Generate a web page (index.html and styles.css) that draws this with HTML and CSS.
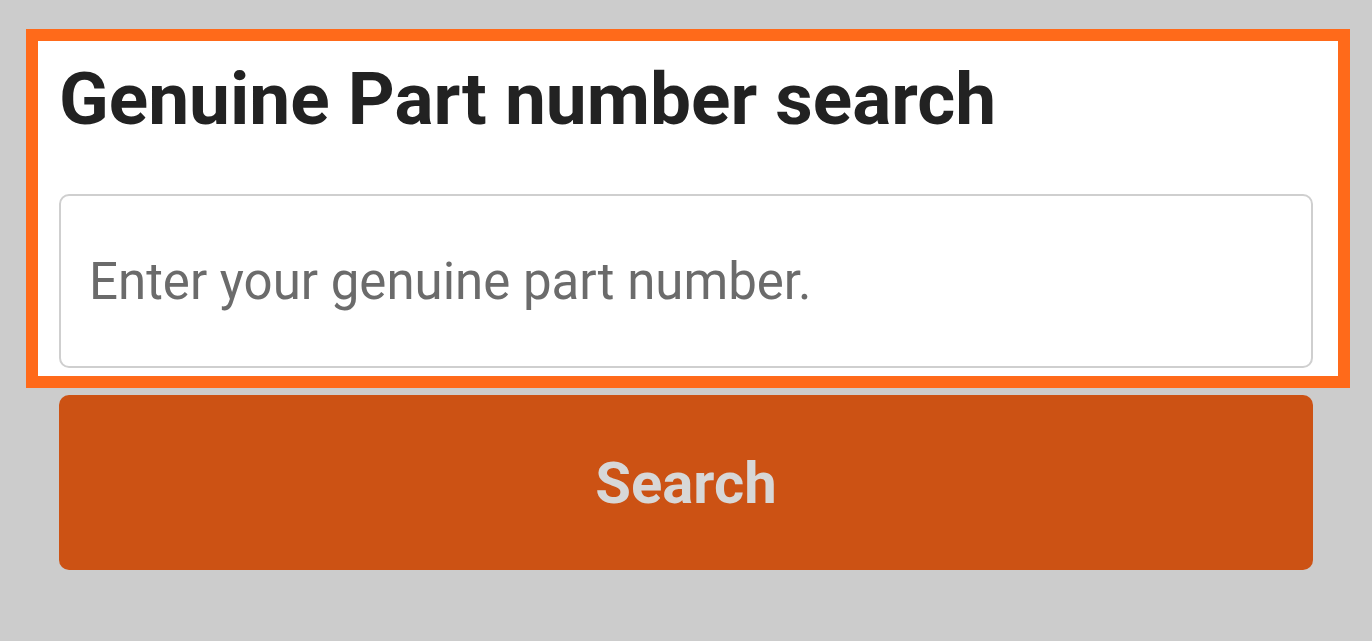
FILE: index.html
```html
<!DOCTYPE html>
<html lang="en">
<head>
<meta charset="utf-8">
<title>Genuine Part number search</title>
<link rel="stylesheet" href="styles.css">
</head>
<body>
<div class="page">
  <form class="search-form" onsubmit="return false;">
    <div class="highlight-box">
      <h1 class="title">Genuine Part number search</h1>
      <input class="part-input" type="text" placeholder="Enter your genuine part number.">
    </div>
    <button class="search-btn" type="submit">Search</button>
  </form>
</div>
</body>
</html>
```
FILE: styles.css
```css
html, body {
  margin: 0;
  padding: 0;
  background: #cccccc;
  font-family: Roboto, "Liberation Sans", Arial, sans-serif;
}
.page {
  padding: 29px 22px 0 26px;
}
.search-form {
  display: flex;
  flex-direction: column;
  width: 1324px;
}
.highlight-box {
  box-sizing: border-box;
  border: 12px solid #ff6a1a;
  background: #ffffff;
  padding: 14px 25px 8px 21px;
  display: flex;
  flex-direction: column;
}
.title {
  margin: 0 0 50px 0;
  font-size: 73px;
  line-height: 89px;
  font-weight: 700;
  color: #222222;
}
.part-input {
  box-sizing: border-box;
  height: 174px;
  border: 2px solid #cfcfcf;
  border-radius: 10px;
  padding: 0 28px;
  font-family: inherit;
  font-size: 51px;
  color: #333;
  background: #fff;
  outline: none;
}
.part-input::placeholder {
  color: #6b6b6b;
}
.search-btn {
  margin: 7px 37px 0 33px;
  height: 175px;
  border: none;
  border-radius: 10px;
  background: #cc5214;
  color: #d7d7d7;
  font-family: inherit;
  font-size: 58px;
  font-weight: 700;
  cursor: pointer;
}
```
